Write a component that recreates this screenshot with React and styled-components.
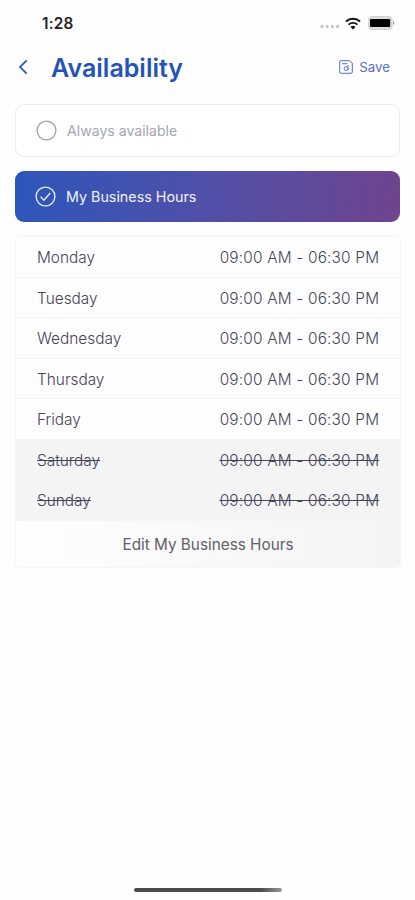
import React from 'react';
import styled, { createGlobalStyle } from 'styled-components';

const time = '09:00 AM - 06:30 PM';

const days = [
  { name: 'Monday' },
  { name: 'Tuesday' },
  { name: 'Wednesday' },
  { name: 'Thursday' },
  { name: 'Friday' },
  { name: 'Saturday', closed: true },
  { name: 'Sunday', closed: true },
];

const App = () => {
  return (
    <>
      <GlobalStyle />
      <Screen>
        <StatusBar>
          <Clock>1:28</Clock>
          <StatusIcons>
            <SignalDots />
            <WifiIcon />
            <BatteryIcon />
          </StatusIcons>
        </StatusBar>
        <Header>
          <BackButton aria-label='Back'>
            <svg width='10' height='16' viewBox='0 0 10 16'>
              <path d='M8.7 1.4 2 8l6.7 6.6' />
            </svg>
          </BackButton>
          <Title>Availability</Title>
          <SaveButton>
            <SaveIcon />
            <span>Save</span>
          </SaveButton>
        </Header>
        <Options>
          <Option>
            <RadioIcon />
            <span>Always available</span>
          </Option>
          <Option $selected>
            <RadioIcon checked />
            <span>My Business Hours</span>
          </Option>
        </Options>
        <Schedule>
          {days.map((day) => (
            <Day key={day.name} $closed={day.closed}>
              <span>{day.name}</span>
              <Hours>{time}</Hours>
            </Day>
          ))}
          <EditButton>Edit My Business Hours</EditButton>
        </Schedule>
        <HomeIndicator />
      </Screen>
    </>
  );
};

export default App;

const SignalDots = () => (
  <svg width='20' height='5' viewBox='0 0 20 5' fill='#c4c4c4'>
    <rect x='0.5' y='1' width='3' height='3' rx='1' />
    <rect x='5.7' y='1' width='3' height='3' rx='1' />
    <rect x='10.9' y='1' width='3' height='3' rx='1' />
    <rect x='16.1' y='1' width='3' height='3' rx='1' />
  </svg>
);

const WifiIcon = () => (
  <svg width='16' height='13' viewBox='0 0 16 13' fill='none'>
    <path d='M1 4.6a10.2 10.2 0 0 1 14 0' stroke='#111' strokeWidth='2.1' />
    <path d='M3.6 7.6a6.4 6.4 0 0 1 8.8 0' stroke='#111' strokeWidth='1.9' />
    <path d='M8 12.4 5.5 9.9a3.7 3.7 0 0 1 5 0Z' fill='#111' />
  </svg>
);

const BatteryIcon = () => (
  <svg width='27' height='14' viewBox='0 0 27 14'>
    <rect x='0.5' y='0.5' width='23.5' height='13' rx='3' fill='#dedede' stroke='#d2d2d2' />
    <rect x='2' y='3' width='20.2' height='8' rx='1' fill='#050505' />
    <path d='M25 5c1.8.6 1.8 3.4 0 4Z' fill='#999' />
  </svg>
);

const SaveIcon = () => (
  <svg width='14' height='14' viewBox='0 0 14 14'>
    <path d='M2 .7h8.6l2.7 2.4V12a1.3 1.3 0 0 1-1.3 1.3H2A1.3 1.3 0 0 1 .7 12V2A1.3 1.3 0 0 1 2 .7Z' />
    <path d='M3.2 3.7h5.2' />
    <circle cx='7' cy='8.6' r='1.9' />
    <path d='M9 5.2v5' />
  </svg>
);

const RadioIcon = ({ checked }) => (
  <svg width='21' height='21' viewBox='0 0 21 21'>
    <circle cx='10.5' cy='10.5' r='9.4' />
    {checked && <path d='m5.6 10.8 3.3 3.4 6.4-7.2' />}
  </svg>
);

const GlobalStyle = createGlobalStyle`
  * {
    box-sizing: border-box;
    margin: 0;
    padding: 0;
  }

  body {
    background: #fefefe;
    font-family: Inter, 'Liberation Sans', sans-serif;
  }

  button {
    background: none;
    border: 0;
    font: inherit;
  }
`;

const Screen = styled.main`
  display: flex;
  flex-direction: column;
  width: 415px;
  height: 900px;
  overflow: hidden;
`;

const StatusBar = styled.div`
  height: 46px;
  padding: 0 20px 0 42px;
  display: flex;
  align-items: center;
  justify-content: space-between;
`;

const Clock = styled.span`
  color: #222;
  font-size: 15.3px;
  font-weight: 600;
  letter-spacing: 0.2px;
`;

const StatusIcons = styled.div`
  display: flex;
  align-items: center;

  & svg:first-child {
    margin: 7px 5px 0 0;
  }

  & svg:last-child {
    margin-left: 7px;
  }
`;

const Header = styled.header`
  height: 42px;
  padding: 0 25px 0 18px;
  display: flex;
  align-items: center;
  color: #2453b8;
`;

const BackButton = styled.button`
  display: flex;
  width: 33px;

  & path {
    fill: none;
    stroke: #2453b8;
    stroke-width: 1.7;
  }
`;

const Title = styled.h1`
  padding-top: 1px;
  font-size: 25px;
  font-weight: 600;
  line-height: 30px;
`;

const SaveButton = styled.button`
  margin-left: auto;
  display: flex;
  align-items: center;
  gap: 6px;
  color: #5871c9;
  font-size: 13.3px;

  & svg {
    fill: none;
    stroke: #5871c9;
    stroke-width: 1;
  }
`;

const Options = styled.div`
  margin: 16px 15px 0;
  display: flex;
  flex-direction: column;
  gap: 14px;
`;

const Option = styled.button`
  height: ${(props) => (props.$selected ? '51px' : '53px')};
  padding: 0 20px 1px;
  display: flex;
  align-items: center;
  gap: 10px;
  border: ${(props) => (props.$selected ? '0' : '1.5px solid #ebebed')};
  border-radius: 9px;
  background: ${(props) =>
    props.$selected
      ? 'linear-gradient(100deg, #2c56bb 0%, #5150a8 50%, #6f448f 100%)'
      : '#fff'};
  color: ${(props) => (props.$selected ? '#f1f2fb' : '#a3a7ae')};
  font-size: ${(props) => (props.$selected ? '14.3px' : '14.1px')};

  & svg {
    fill: none;
    stroke: ${(props) => (props.$selected ? '#e6eafa' : '#a0a5ad')};
    stroke-width: 1.4;
  }
`;

const Schedule = styled.section`
  margin: 14px 14px 0 15px;
  border: 1px solid #f5f5f7;
  border-radius: 5px;
  overflow: hidden;
`;

const Day = styled.div`
  height: 40.5px;
  padding: 2px 21px 0;
  display: flex;
  align-items: center;
  justify-content: space-between;
  border-bottom: 1px solid #f5f5f6;
  background: ${(props) => (props.$closed ? '#f4f4f5' : '#fefefe')};
  color: #454358;
  font-size: 15.4px;
  font-weight: 300;
  text-decoration: ${(props) => (props.$closed ? 'line-through' : 'none')};
`;

const Hours = styled.span`
  margin-right: -0.2px;
  letter-spacing: 0.18px;
  text-decoration: inherit;
`;

const EditButton = styled.button`
  width: 100%;
  height: 46.5px;
  padding-top: 1px;
  display: block;
  background: linear-gradient(90deg, #fefefe 0%, #f4f4f5 100%);
  color: #626167;
  font-size: 15.3px;
`;

const HomeIndicator = styled.div`
  width: 148px;
  height: 4px;
  margin: auto auto 8px;
  border-radius: 2px;
  background: linear-gradient(90deg, #4a4a4a 85%, #999 100%);
`;
